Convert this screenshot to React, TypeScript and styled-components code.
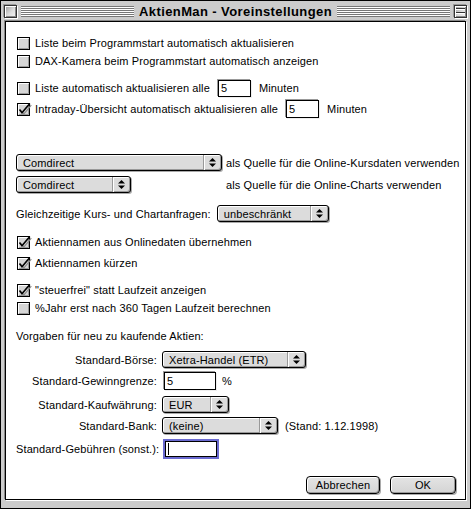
import React from 'react';
import styled, { createGlobalStyle } from 'styled-components';

const Global = createGlobalStyle`
  html, body { margin: 0; padding: 0; background: #fff; }
  body { font-family: "Liberation Sans", Arial, sans-serif; font-size: 11px; letter-spacing: 0.12px; color: #000; }
  * { box-sizing: border-box; }
`;

const Window = styled.div`
  width: 471px;
  height: 509px;
  border: 1px solid #000;
  background: #cccccc;
  display: flex;
  flex-direction: column;
`;

const TitleBar = styled.div`
  height: 20px;
  flex: none;
  display: flex;
  align-items: center;
  padding: 0 3px;
`;

const BoxBtn = styled.div`
  width: 13px;
  height: 13px;
  flex: none;
  border: 1px solid #333;
  background: linear-gradient(135deg, #999 0%, #ddd 55%, #f4f4f4 100%);
  box-shadow: inset 1px 1px #fff, inset -1px -1px #888, -1px -1px #999, 1px 1px #fff;
  display: flex;
  flex-direction: column;
  justify-content: center;
  align-items: center;
  gap: 2px;
`;

const ShadeLine = styled.div`
  width: 9px;
  height: 2px;
  border-top: 1px solid #333;
  border-bottom: 1px solid #fff;
`;

const Stripes = styled.div`
  flex: 1;
  height: 11px;
  margin: 0 4px;
  background: repeating-linear-gradient(to bottom, #777 0, #777 1px, #fff 1px, #fff 2px);
`;

const Title = styled.div`
  font-family: "Liberation Sans", Arial, sans-serif;
  font-weight: bold;
  font-size: 13px;
  letter-spacing: 0.4px;
  padding: 0 1px;
  white-space: nowrap;
`;

const Frame = styled.div`
  flex: 1;
  display: flex;
  padding: 0 4px 8px 4px;
`;

const Content = styled.div`
  flex: 1;
  border: 1px solid #000;
  background: #fff;
  padding: 12px 0 0 10px;
  display: flex;
  flex-direction: column;
  box-shadow: -1px -1px #888, 1px 1px #fff;
`;

const Row = styled.div<{ $mt?: number; $h?: number }>`
  display: flex;
  align-items: center;
  height: ${p => p.$h ?? 18}px;
  margin-top: ${p => p.$mt ?? 0}px;
  flex: none;
  white-space: nowrap;
`;

const Label = styled.span<{ $ml?: number }>`
  margin-left: ${p => p.$ml ?? 0}px;
`;

const CheckWrap = styled.label`
  display: flex;
  align-items: center;
  gap: 5px;
  margin-left: 1px;
`;

const CheckSvg = styled.svg`
  flex: none;
  overflow: visible;
`;

function Check({ on, children }: { on?: boolean; children: React.ReactNode }) {
  return (
    <CheckWrap>
      <CheckSvg width="13" height="13" viewBox="0 0 13 13">
        <rect x="0.5" y="0.5" width="12" height="12" fill="#d6d6d6" stroke="#000" />
        <path d="M1.5 11.5 V1.5 H11.5" stroke="#fff" fill="none" />
        <path d="M2 11.5 H11.5 V2" stroke="#9a9a9a" fill="none" />
        {on && (
          <>
            <path d="M3.5 7 L6 10.5 L13.5 1.5" stroke="#8a8a8a" strokeWidth="1.2" fill="none" transform="translate(0.8 0.6)" />
            <path d="M2.5 6.5 L5 9.8 L12.8 0.6" stroke="#000" strokeWidth="1.6" fill="none" />
          </>
        )}
      </CheckSvg>
      <span>{children}</span>
    </CheckWrap>
  );
}

const PopupBox = styled.div<{ $w: number; $ml?: number }>`
  width: ${p => p.$w}px;
  height: 17px;
  margin-left: ${p => p.$ml ?? 0}px;
  flex: none;
  border: 1px solid #000;
  border-radius: 3px;
  background: #dcdcdc;
  box-shadow: inset 1px 1px #fff, inset -1px -1px #999, 1px 1px #aaa;
  display: flex;
  align-items: center;
`;

const PopupText = styled.span`
  flex: 1;
  padding-left: 6px;
  overflow: hidden;
`;

const PopupArrow = styled.span`
  width: 18px;
  height: 100%;
  border-left: 1px solid #999;
  box-shadow: inset 1px 0 #fff;
  display: flex;
  align-items: center;
  justify-content: center;
`;

function Popup({ w, ml, children }: { w: number; ml?: number; children: React.ReactNode }) {
  return (
    <PopupBox $w={w} $ml={ml}>
      <PopupText>{children}</PopupText>
      <PopupArrow>
        <svg width="7" height="9" viewBox="0 0 7 9">
          <path d="M3.5 0 L7 3.5 H0 Z" fill="#000" />
          <path d="M0 5.5 H7 L3.5 9 Z" fill="#000" />
        </svg>
      </PopupArrow>
    </PopupBox>
  );
}

const Field = styled.div<{ $w: number; $h?: number; $ml?: number; $mr?: number; $focus?: boolean }>`
  width: ${p => p.$w}px;
  height: ${p => p.$h ?? 17}px;
  margin-left: ${p => p.$ml ?? 0}px;
  margin-right: ${p => p.$mr ?? 0}px;
  flex: none;
  border: 1px solid #000;
  background: #fff;
  padding-left: 2px;
  display: flex;
  align-items: center;
  box-shadow: ${p => (p.$focus ? '0 0 0 2px #6a6ad0' : '-1px -1px #999, 1px 1px #eee')};
`;

const Caret = styled.span`
  width: 1px;
  height: 12px;
  background: #000;
`;

const Slot = styled.div<{ $w: number }>`
  width: ${p => p.$w}px;
  flex: none;
  display: flex;
`;

const FormLabel = styled.span`
  width: 141px;
  flex: none;
  text-align: right;
  margin-right: 5px;
`;

const Buttons = styled.div`
  display: flex;
  justify-content: flex-end;
  gap: 10px;
  padding-right: 9px;
  margin-top: 17px;
`;

const Button = styled.button<{ $w: number }>`
  width: ${p => p.$w}px;
  height: 18px;
  padding: 0;
  border: 1px solid #000;
  border-radius: 4px;
  background: linear-gradient(to bottom, #e4e4e4, #d4d4d4);
  box-shadow: inset 1px 1px #fff, inset -1px -1px #999, 1px 1px #aaa;
  font-family: "Liberation Sans", Arial, sans-serif;
  font-size: 11px;
  letter-spacing: 0.12px;
  color: #000;
`;

export default function App() {
  return (
    <>
      <Global />
      <Window>
        <TitleBar>
          <BoxBtn />
          <Stripes />
          <Title>AktienMan - Voreinstellungen</Title>
          <Stripes />
          <BoxBtn>
            <ShadeLine />
            <ShadeLine />
          </BoxBtn>
        </TitleBar>
        <Frame>
          <Content>
            <Row>
              <Check>Liste beim Programmstart automatisch aktualisieren</Check>
            </Row>
            <Row>
              <Check>DAX-Kamera beim Programmstart automatisch anzeigen</Check>
            </Row>
            <Row $mt={9}>
              <Check>Liste automatisch aktualisieren alle</Check>
              <Field $w={33} $ml={8} $mr={8}>5</Field>
              <Label>Minuten</Label>
            </Row>
            <Row $mt={3}>
              <Check on>Intraday-Übersicht automatisch aktualisieren alle</Check>
              <Field $w={33} $ml={8} $mr={8} $h={18}>5</Field>
              <Label>Minuten</Label>
            </Row>
            <Row $mt={36} $h={17}>
              <Slot $w={210}>
                <Popup w={206}>Comdirect</Popup>
              </Slot>
              <Label>als Quelle für die Online-Kursdaten verwenden</Label>
            </Row>
            <Row $mt={5} $h={17}>
              <Slot $w={210}>
                <Popup w={115}>Comdirect</Popup>
              </Slot>
              <Label>als Quelle für die Online-Charts verwenden</Label>
            </Row>
            <Row $mt={12} $h={17}>
              <Label>Gleichzeitige Kurs- und Chartanfragen:</Label>
              <Popup w={112} ml={6}>unbeschränkt</Popup>
            </Row>
            <Row $mt={11}>
              <Check on>Aktiennamen aus Onlinedaten übernehmen</Check>
            </Row>
            <Row $mt={3}>
              <Check on>Aktiennamen kürzen</Check>
            </Row>
            <Row $mt={9}>
              <Check on>"steuerfrei" statt Laufzeit anzeigen</Check>
            </Row>
            <Row>
              <Check>%Jahr erst nach 360 Tagen Laufzeit berechnen</Check>
            </Row>
            <Row $mt={10}>
              <Label>Vorgaben für neu zu kaufende Aktien:</Label>
            </Row>
            <Row $mt={6} $h={17}>
              <FormLabel>Standard-Börse:</FormLabel>
              <Popup w={144}>Xetra-Handel (ETR)</Popup>
            </Row>
            <Row $mt={4} $h={18}>
              <FormLabel>Standard-Gewinngrenze:</FormLabel>
              <Field $w={52} $h={18} $ml={2} $mr={6}>5</Field>
              <Label>%</Label>
            </Row>
            <Row $mt={6} $h={17}>
              <FormLabel>Standard-Kaufwährung:</FormLabel>
              <Popup w={67}>EUR</Popup>
            </Row>
            <Row $mt={4} $h={17}>
              <FormLabel>Standard-Bank:</FormLabel>
              <Popup w={116}>(keine)</Popup>
              <Label $ml={7}>(Stand: 1.12.1998)</Label>
            </Row>
            <Row $mt={5} $h={20}>
              <FormLabel>Standard-Gebühren (sonst.):</FormLabel>
              <Field $w={52} $h={16} $ml={3} $focus>
                <Caret />
              </Field>
            </Row>
            <Buttons>
              <Button $w={74}>Abbrechen</Button>
              <Button $w={66}>OK</Button>
            </Buttons>
          </Content>
        </Frame>
      </Window>
    </>
  );
}
